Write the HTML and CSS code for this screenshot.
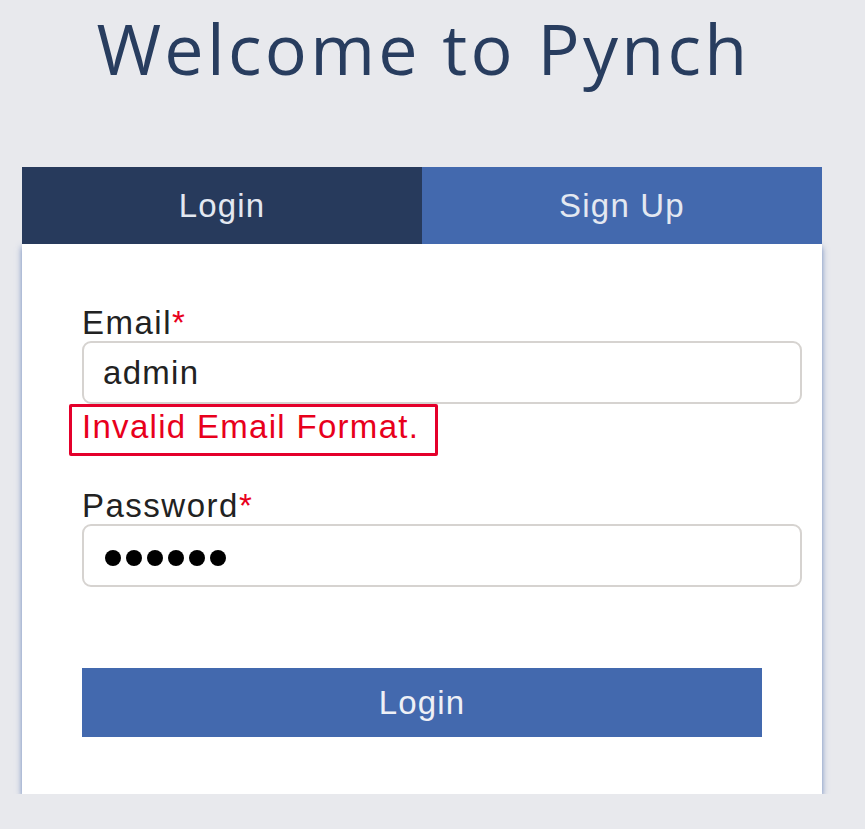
FILE: index.html
```html
<!DOCTYPE html>
<html>
<head>
<meta charset="utf-8">
<link rel="stylesheet" href="styles.css">
</head>
<body>
<div class="page">
  <h1 class="title">Welcome to Pynch</h1>
  <div class="card">
    <div class="tabs">
      <div class="tab tab-active">Login</div>
      <div class="tab tab-other">Sign Up</div>
    </div>
    <form class="body">
      <div class="field">
        <label class="label">Email<span class="req">*</span></label>
        <div class="input">admin</div>
        <div class="error">Invalid Email Format.</div>
      </div>
      <div class="field field-pass">
        <label class="label">Password<span class="req">*</span></label>
        <div class="input input-pass" aria-label="password">
          <span class="dot"></span><span class="dot"></span><span class="dot"></span><span class="dot"></span><span class="dot"></span><span class="dot"></span>
        </div>
      </div>
      <div class="btn">Login</div>
    </form>
  </div>
</div>
</body>
</html>
```
FILE: styles.css
```css
html, body {
  margin: 0;
  padding: 0;
  background: #e8e9ed;
}
.page {
  width: 800px;
  padding-left: 22px;
  font-family: "Liberation Sans", Arial, sans-serif;
}
.title {
  margin: 0;
  height: 167px;
  box-sizing: border-box;
  padding-top: 8px;
  padding-left: 3px;
  text-align: center;
  font-family: "Open Sans", sans-serif;
  font-weight: 400;
  font-size: 70px;
  letter-spacing: 3.3px;
  line-height: 80px;
  color: #283d5f;
}
.card {
  display: flex;
  flex-direction: column;
}
.tabs {
  display: flex;
  height: 77px;
  position: relative;
  z-index: 1;
}
.tab {
  flex: 1;
  display: flex;
  align-items: center;
  justify-content: center;
  color: #e3e8f1;
  font-size: 33px;
  letter-spacing: 1.2px;
}
.tab-active { background: #273a5c; }
.tab-other { background: #4369ae; }
.body {
  background: #fff;
  box-shadow: 0 3px 6px rgba(66, 100, 172, 0.75);
  padding: 60px 20px 57px 60px;
  display: flex;
  flex-direction: column;
  margin: 0;
}
.label {
  display: block;
  font-size: 33px;
  letter-spacing: 1.5px;
  line-height: 37px;
  color: #222;
}
.req { color: #e8001c; letter-spacing: 0; }
.input {
  box-sizing: border-box;
  height: 63px;
  border: 2px solid #d6d3d0;
  border-radius: 9px;
  padding-left: 19px;
  display: flex;
  align-items: center;
  font-size: 33px;
  letter-spacing: 1.3px;
  color: #222;
}
.input-pass {
  gap: 5px;
  padding-left: 21px;
  padding-top: 4px;
}
.dot {
  width: 16px;
  height: 16px;
  border-radius: 50%;
  background: #000;
}
.error {
  margin-left: -13px;
  width: 369px;
  box-sizing: border-box;
  height: 52px;
  border: 3px solid #e4002b;
  border-radius: 2px;
  padding-left: 10px;
  color: #e8001c;
  font-size: 33px;
  letter-spacing: 1.3px;
  line-height: 40px;
}
.field-pass { margin-top: 31px; }
.btn {
  margin-top: 81px;
  width: 680px;
  height: 69px;
  background: #4369ae;
  color: #eef0f6;
  font-size: 33px;
  letter-spacing: 1.2px;
  display: flex;
  align-items: center;
  justify-content: center;
}
```
